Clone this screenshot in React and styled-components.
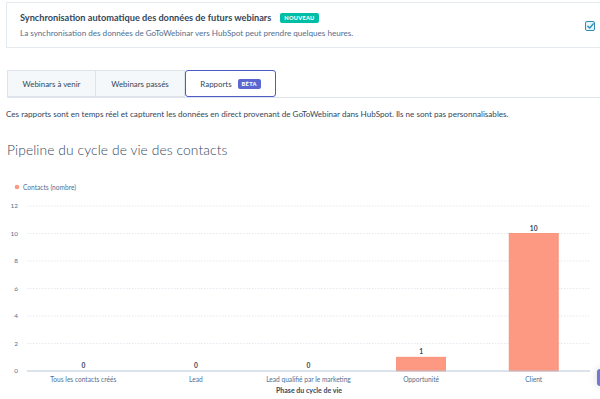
import React from "react";
import styled, { createGlobalStyle } from "styled-components";

const Global = createGlobalStyle`
  html, body { margin: 0; padding: 0; background: #fff; overflow: hidden; }
  body { font-family: Lato, "Open Sans", sans-serif; color: #33475b; width: 600px; height: 399px; position: relative; }
`;

const Page = styled.div`
  position: relative;
  width: 600px;
  height: 399px;
  overflow: hidden;
`;

const SyncCard = styled.div`
  margin: 2px -12px 0 6px;
  height: 44px;
  border: 1px solid #e5e9f0;
  display: flex;
  align-items: center;
  justify-content: space-between;
  padding: 0 16px 0 13px;
  box-sizing: content-box;
`;

const SyncText = styled.div`
  display: flex;
  flex-direction: column;
  gap: 3px;
`;

const SyncTitle = styled.div`
  display: flex;
  align-items: center;
  gap: 9px;
  font-size: 9.2px;
  font-weight: 700;
  color: #33475b;
  line-height: 13px;
`;

const Badge = styled.span`
  display: inline-block;
  background: ${(p) => p.$bg};
  color: #fff;
  font-size: 5.6px;
  font-weight: 900;
  letter-spacing: 0.3px;
  padding: 1.5px 4px;
  border-radius: 2px;
  line-height: 7px;
`;

const SyncSub = styled.div`
  font-size: 8.1px;
  color: #516f90;
  line-height: 12px;
`;

const CheckBox = styled.div`
  width: 8px;
  height: 8px;
  border: 1.5px solid #2d8db5;
  border-radius: 2px;
  background: #e5f5f8;
  display: flex;
  align-items: center;
  justify-content: center;
  margin-top: 2px;
`;

const TabsRow = styled.div`
  display: flex;
  margin: 22px 0 0 7px;
  border-bottom: 1px solid #dfe3eb;
  height: 27px;
`;

const Tab = styled.div`
  width: ${(p) => p.$w}px;
  box-sizing: border-box;
  display: flex;
  align-items: center;
  justify-content: center;
  gap: 6px;
  font-size: 7.9px;
  color: #33475b;
  background: ${(p) => (p.$active ? "#fff" : "#f5f8fa")};
  border: 1px solid ${(p) => (p.$active ? "#4f5bc6" : "#dfe3eb")};
  border-left-width: ${(p) => (p.$first || p.$active ? 1 : 0)}px;
  border-radius: ${(p) => (p.$active ? "3px" : "0")};
  height: 27px;
`;

const Description = styled.p`
  margin: 10px 0 0 6px;
  font-size: 8.1px;
  line-height: 12px;
  color: #33475b;
`;

const Heading = styled.h2`
  margin: 21px 0 0 7px;
  font-size: 13.8px;
  font-weight: 300;
  line-height: 18px;
  color: #33475b;
  letter-spacing: 0.1px;
`;

const Chart = styled.svg`
  display: block;
  margin-top: 21px;
`;

const CornerWidget = styled.div`
  position: absolute;
  left: 597px;
  top: 369px;
  width: 20px;
  height: 17px;
  background: #7079d3;
  border-radius: 3px;
  box-shadow: 0 0 8px rgba(0, 0, 0, 0.15);
`;

const categories = [
  { label: "Tous les contacts créés", value: 0 },
  { label: "Lead", value: 0 },
  { label: "Lead qualifié par le marketing", value: 0 },
  { label: "Opportunité", value: 1 },
  { label: "Client", value: 10 },
];

function PipelineChart() {
  const top = 180;
  const x0 = 27;
  const x1 = 590;
  const yZero = 371 - top;
  const unit = 13.75;
  const catW = (x1 - x0) / categories.length;
  const ticks = [0, 2, 4, 6, 8, 10, 12];
  return (
    <Chart width="600" height="219" viewBox="0 0 600 219">
      <circle cx="17" cy={187 - top} r="2.3" fill="#fd9882" />
      <text x="23" y={189.5 - top} fontSize="6.6" fill="#516f90" fontFamily="Lato, sans-serif">
        Contacts (nombre)
      </text>
      {ticks.map((t) => {
        const y = yZero - t * unit;
        return (
          <g key={t}>
            <text x="18" y={y + 2.4} fontSize="6.4" fill="#516f90" textAnchor="end" fontFamily="Lato, sans-serif">
              {t}
            </text>
            {t !== 0 && (
              <line x1={x0} x2={x1} y1={y} y2={y} stroke="#dfe3eb" strokeWidth="0.8" strokeDasharray="1.5 1.5" />
            )}
          </g>
        );
      })}
      {categories.map((c, i) => {
        const cx = x0 + catW * (i + 0.5);
        const h = c.value * unit;
        return (
          <g key={c.label}>
            {c.value > 0 && (
              <rect x={cx - 24.5} y={yZero - h} width="49" height={h} fill="#fd9882" stroke="#f98a72" strokeWidth="0.8" />
            )}
            <text
              x={cx}
              y={yZero - h - 3}
              fontSize="6.6"
              fontWeight="700"
              fill="#33475b"
              textAnchor="middle"
              fontFamily="Lato, sans-serif"
            >
              {c.value}
            </text>
            <text x={cx} y={yZero + 11} fontSize="6.6" fill="#516f90" textAnchor="middle" fontFamily="Lato, sans-serif">
              {c.label}
            </text>
          </g>
        );
      })}
      <line x1={x0} x2={x1} y1={yZero} y2={yZero} stroke="#b9c6d6" strokeWidth="1" />
      <text
        x="309"
        y={yZero + 22}
        fontSize="7"
        fontWeight="700"
        fill="#33475b"
        textAnchor="middle"
        fontFamily="Lato, sans-serif"
      >
        Phase du cycle de vie
      </text>
    </Chart>
  );
}

export default function App() {
  return (
    <Page>
      <Global />
      <SyncCard>
        <SyncText>
          <SyncTitle>
            Synchronisation automatique des données de futurs webinars
            <Badge $bg="#00bda5">NOUVEAU</Badge>
          </SyncTitle>
          <SyncSub>
            La synchronisation des données de GoToWebinar vers HubSpot peut prendre quelques heures.
          </SyncSub>
        </SyncText>
        <CheckBox>
          <svg width="7" height="6" viewBox="0 0 7 6">
            <path d="M0.8 3.2 L2.7 5 L6.2 0.9" fill="none" stroke="#2d8db5" strokeWidth="1.4" strokeLinecap="round" strokeLinejoin="round" />
          </svg>
        </CheckBox>
      </SyncCard>
      <TabsRow>
        <Tab $w={89} $first>Webinars à venir</Tab>
        <Tab $w={89}>Webinars passés</Tab>
        <Tab $w={91} $active>
          Rapports <Badge $bg="#5a67d0">BÊTA</Badge>
        </Tab>
      </TabsRow>
      <Description>
        Ces rapports sont en temps réel et capturent les données en direct provenant de GoToWebinar dans HubSpot. Ils ne sont pas personnalisables.
      </Description>
      <Heading>Pipeline du cycle de vie des contacts</Heading>
      <PipelineChart />
      <CornerWidget />
    </Page>
  );
}
